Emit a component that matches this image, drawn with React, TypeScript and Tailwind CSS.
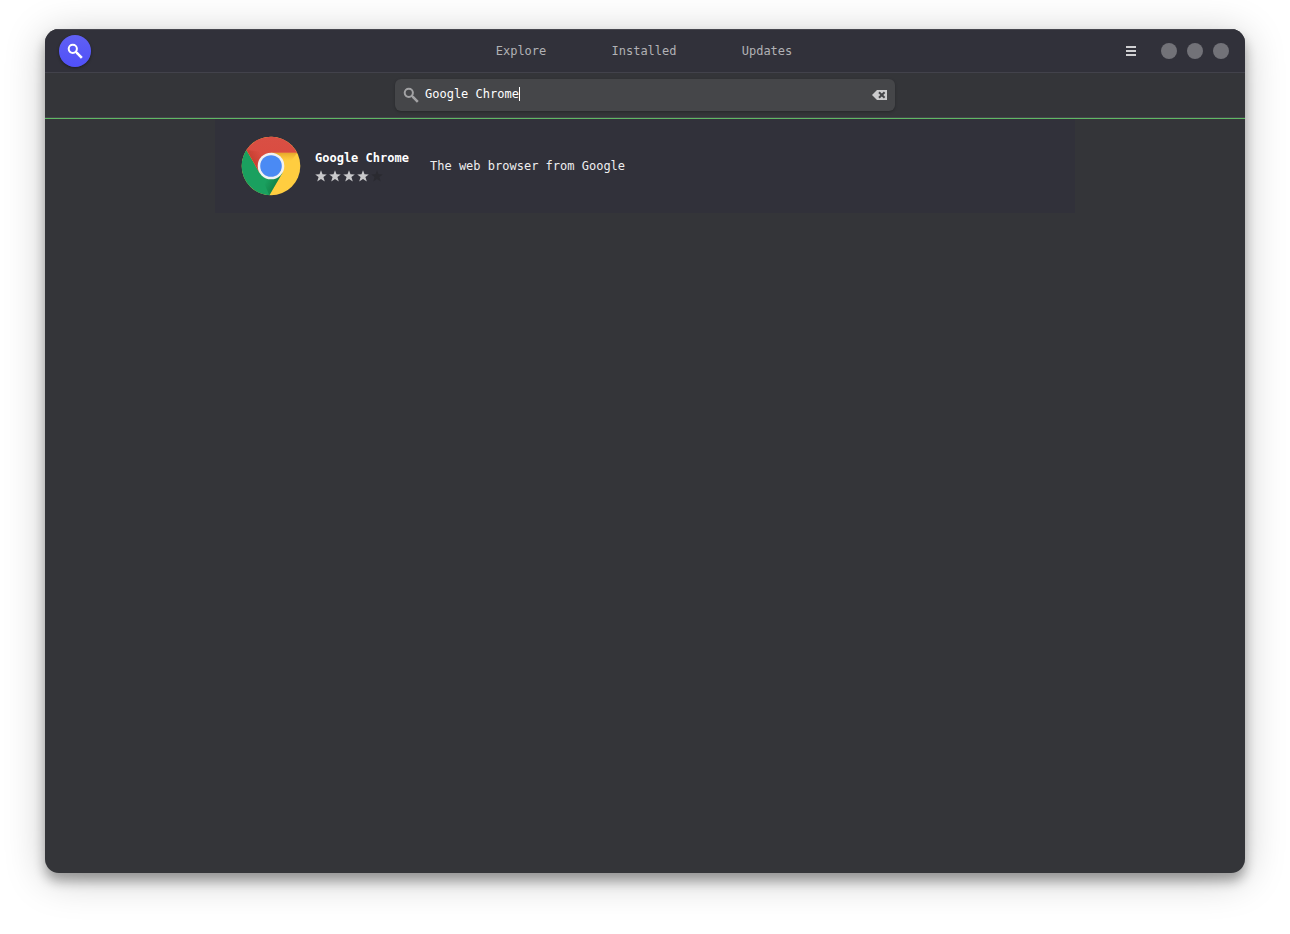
import { useState } from "react";

const tabs = ["Explore", "Installed", "Updates"];

const windowActions = ["Minimize", "Maximize", "Close"];

function SearchIcon({ className }: { className: string }) {
  return (
    <svg viewBox="0 0 16 16" className={className} fill="none" stroke="currentColor" aria-hidden="true">
      <circle cx="5.8" cy="5.8" r="4.1" strokeWidth="2" />
      <path d="M8.8 8.8 10.5 10.5" strokeWidth="2" />
      <path d="M10.6 10.6 13.9 13.9" strokeWidth="2.6" strokeLinecap="square" />
    </svg>
  );
}

function MenuIcon() {
  return (
    <svg viewBox="0 0 16 16" className="size-4" fill="currentColor" aria-hidden="true">
      <path d="M3 3h10v2H3zM3 7h10v2H3zM3 11h10v2H3z" />
    </svg>
  );
}

function ClearIcon() {
  return (
    <svg viewBox="0 0 16 16" className="size-4" aria-hidden="true">
      <path d="M6 3h10v10H6L1 8z" fill="#cbcbcd" />
      <path d="m8 5.2 5.6 5.6m0-5.6-5.6 5.6" stroke="#454649" strokeWidth="2" />
    </svg>
  );
}

function Star({ filled }: { filled: boolean }) {
  return (
    <svg viewBox="0 0 12 12" className={filled ? "size-3 text-[#c9c9cb]" : "size-3 text-[#2a2a30]"} fill="currentColor" aria-hidden="true">
      <path d="M6 .2 7.5 4.2 11.8 4.4 8.4 7.1 9.8 11.6 6 9 2.2 11.6 3.6 7.1.2 4.4 4.5 4.2z" />
    </svg>
  );
}

function ChromeLogo() {
  return (
    <svg viewBox="-32 -32 64 64" className="size-16 shrink-0" aria-hidden="true">
      <defs>
        <linearGradient id="red" x1="0" y1="0" x2="0" y2="1">
          <stop offset="0" stopColor="#d94f44" />
          <stop offset="1" stopColor="#db4a3e" />
        </linearGradient>
        <linearGradient id="redShade" gradientUnits="userSpaceOnUse" x1="-19" y1="-5" x2="-9" y2="-11">
          <stop offset="0" stopColor="#a52714" stopOpacity="0.35" />
          <stop offset="1" stopColor="#a52714" stopOpacity="0" />
        </linearGradient>
        <linearGradient id="greenShade" gradientUnits="userSpaceOnUse" x1="6" y1="18" x2="-4" y2="12.5">
          <stop offset="0" stopColor="#055524" stopOpacity="0.4" />
          <stop offset="1" stopColor="#055524" stopOpacity="0" />
        </linearGradient>
        <linearGradient id="yellowShade" gradientUnits="userSpaceOnUse" x1="0" y1="-13" x2="0" y2="-5">
          <stop offset="0" stopColor="#c77a12" stopOpacity="0.45" />
          <stop offset="1" stopColor="#ea9c20" stopOpacity="0" />
        </linearGradient>
      </defs>
      <circle r="29.3" fill="#ffcd40" />
      <path d="M0-13.3H26.3L11.5 6.6z" fill="url(#yellowShade)" />
      <path d="M-24.6-16A29.3 29.3 0 0 0-1.6 29.2L11.5 6.65-11.5 6.65z" fill="#1aa05f" />
      <path d="M-1.6 29.2 11.5 6.65-11.5 6.65z" fill="url(#greenShade)" />
      <path d="M26.1-13.3A29.3 29.3 0 0 0-24.6-16L-11.5 6.65 0-13.3z" fill="url(#red)" />
      <path d="M-24.6-16-11.5 6.65 0-13.3z" fill="url(#redShade)" />
      <circle r="13.3" fill="#f1f1f1" />
      <circle r="10.8" fill="#4a8af4" />
    </svg>
  );
}

export default function App() {
  const [query, setQuery] = useState("Google Chrome");

  return (
    <div className="flex min-h-screen bg-white px-[45px] pt-[29px] pb-[61px] font-['DejaVu_Sans_Mono',monospace] text-xs text-white">
      <div className="flex flex-1 flex-col overflow-hidden rounded-[14px] bg-[#343539] shadow-[0_8px_12px_rgba(0,0,0,0.32),0_6px_40px_rgba(0,0,0,0.22)]">
        <header className="grid h-11 grid-cols-[1fr_auto_1fr] items-center border-t border-b border-t-[#46464e] border-b-[#42424b] bg-[#31313a] pr-4 pl-3.5">
          <button
            type="button"
            aria-label="Search"
            className="flex size-8 items-center justify-center rounded-full bg-linear-to-b from-[#6060f4] to-[#5050f8] shadow-[0_1px_3px_rgba(0,0,0,0.4)]"
          >
            <SearchIcon className="size-4" />
          </button>
          <nav className="flex">
            {tabs.map((tab) => (
              <button key={tab} type="button" className="w-[123px] text-center text-[#b1b1b5]">
                {tab}
              </button>
            ))}
          </nav>
          <div className="flex items-center justify-end gap-[22px]">
            <button type="button" aria-label="Menu" className="text-[#d0d0d2]">
              <MenuIcon />
            </button>
            <div className="flex gap-2.5">
              {windowActions.map((action) => (
                <button key={action} type="button" aria-label={action} className="size-4 rounded-full bg-[#727278]" />
              ))}
            </div>
          </div>
        </header>

        <div className="border-b border-[#5fb864]">
          <div className="flex justify-center border-b border-[#45464b] py-1.5">
            <label className="flex h-8 w-full max-w-[500px] items-center rounded-md bg-[#454649] px-2 shadow-[0_1px_3px_rgba(0,0,0,0.25)]">
              <SearchIcon className="size-4 shrink-0 text-[#a2a2a4]" />
              <span className="ml-1.5 flex items-center pb-0.5">
                <input
                  type="text"
                  aria-label="Search applications"
                  value={query}
                  onChange={(event) => setQuery(event.target.value)}
                  className="field-sizing-content bg-transparent caret-transparent outline-none"
                />
                <span className="h-3.5 w-px bg-white" />
              </span>
              <button type="button" aria-label="Clear search" onClick={() => setQuery("")} className="ml-auto">
                <ClearIcon />
              </button>
            </label>
          </div>
        </div>

        <main className="flex flex-1 justify-center">
          <ul className="w-full max-w-[860px]">
            <li>
              <a href="#google-chrome" className="flex items-center bg-[#31313a] px-6 py-[15px]">
                <ChromeLogo />
                <div className="ml-3 flex w-[91px] flex-col gap-1">
                  <h2 className="font-bold whitespace-nowrap">Google Chrome</h2>
                  <div className="flex gap-0.5" role="img" aria-label="4 out of 5 stars">
                    {[1, 2, 3, 4, 5].map((n) => (
                      <Star key={n} filled={n <= 4} />
                    ))}
                  </div>
                </div>
                <p className="ml-6 text-[#eeeeef]">The web browser from Google</p>
              </a>
            </li>
          </ul>
        </main>
      </div>
    </div>
  );
}
